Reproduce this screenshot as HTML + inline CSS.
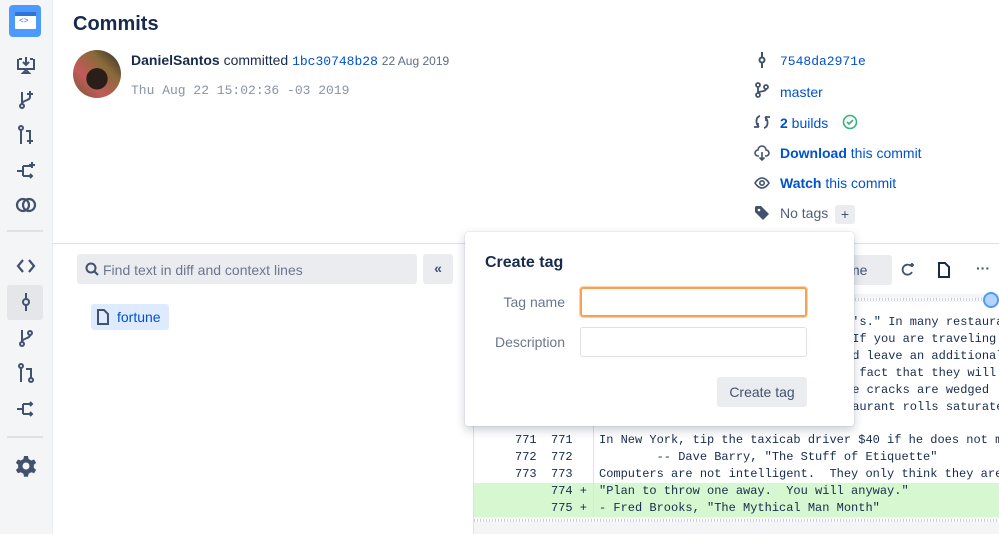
<!DOCTYPE html>
<html><head><meta charset="utf-8"><style>
*{box-sizing:border-box;margin:0;padding:0}
body{width:999px;height:534px;overflow:hidden;background:#fff;font-family:"Liberation Sans",sans-serif;color:#172b4d;position:relative}
.abs{position:absolute}
.side{left:0;top:0;width:53px;height:534px;background:#f4f5f7;border-right:1px solid #ebecf0}
.ic{position:absolute;left:14px;width:24px;height:24px}
.mono{font-family:"Liberation Mono",monospace}
.blue{color:#0052cc}
.code{font-family:"Liberation Mono",monospace;font-size:12px;white-space:pre;color:#172b4d}
.zig{background:repeating-linear-gradient(90deg,#c1c7d0 0 1px,#fff 1px 3px);opacity:.8}
</style></head><body>
<div class="abs side">
 <div class="abs" style="left:9px;top:5px;width:32px;height:32px;background:#4c9aff;border-radius:4px"></div>
 <div class="abs" style="left:15px;top:12px;width:21px;height:17px;background:#fff;border-top:4px solid #2f73d8;border-radius:1px"></div>
 <div class="abs" style="left:19px;top:17px;font-size:8px;color:#2f73d8;font-family:'Liberation Mono'">&lt;&gt;</div>
 <svg class="ic" style="top:53px" viewBox="0 0 24 24" fill="none" stroke="#42526e" stroke-width="2"><path d="M5 6h3M16 6h3M4 6v10h16V6M12 4v8M9 9l3 3 3-3M9 20h6l-3-3z"/></svg>
 <svg class="ic" style="top:88px" viewBox="0 0 24 24" fill="none" stroke="#42526e" stroke-width="2"><circle cx="8" cy="18" r="2"/><path d="M8 4v12M8 16c0-4 8-3 8-7M16 3v6M13 6h6"/></svg>
 <svg class="ic" style="top:123px" viewBox="0 0 24 24" fill="none" stroke="#42526e" stroke-width="2"><circle cx="7" cy="5" r="2"/><path d="M7 7v14M12 8h4v8M16 15v6M13 18h6"/></svg>
 <svg class="ic" style="top:158px" viewBox="0 0 24 24" fill="none" stroke="#42526e" stroke-width="2"><path d="M3 13h6M9 8v10M9 8h9M9 18h9M16 16l2 2-2 2M18 4v6M15 7h6"/></svg>
 <svg class="ic" style="top:193px" viewBox="0 0 24 24" fill="none" stroke="#42526e" stroke-width="2.2"><circle cx="9" cy="12" r="6"/><circle cx="15" cy="12" r="6"/></svg>
 <div class="abs" style="left:7px;top:230px;width:36px;height:2px;background:#dfe1e6"></div>
 <svg class="ic" style="top:254px" viewBox="0 0 24 24" fill="none" stroke="#42526e" stroke-width="2.2"><path d="M9 6l-5 6 5 6M15 6l5 6-5 6"/></svg>
 <div class="abs" style="left:7px;top:285px;width:36px;height:35px;background:#e4e6ea;border-radius:3px"></div>
 <svg class="ic" style="top:290px" viewBox="0 0 24 24" fill="none" stroke="#42526e" stroke-width="2"><path d="M12 3v6M12 15v6"/><circle cx="12" cy="12" r="3"/></svg>
 <svg class="ic" style="top:326px" viewBox="0 0 24 24" fill="none" stroke="#42526e" stroke-width="2"><circle cx="8" cy="18" r="2"/><circle cx="16" cy="7" r="2"/><path d="M8 4v12M8 16c0-4 8-3 8-7"/></svg>
 <svg class="ic" style="top:361px" viewBox="0 0 24 24" fill="none" stroke="#42526e" stroke-width="2"><circle cx="7" cy="5" r="2"/><circle cx="17" cy="19" r="2"/><path d="M7 7v14M12 8h5v9"/></svg>
 <svg class="ic" style="top:396px" viewBox="0 0 24 24" fill="none" stroke="#42526e" stroke-width="2"><path d="M3 13h6M9 8v10M9 8h9M9 18h9M16 6l2 2-2 2M16 16l2 2-2 2"/></svg>
 <div class="abs" style="left:7px;top:436px;width:36px;height:2px;background:#dfe1e6"></div>
 <svg class="ic" style="top:454px" viewBox="0 0 24 24"><path fill="#42526e" d="M10 2h4l.6 3 2.6 1.5 2.9-1 2 3.4-2.3 2v3l2.3 2-2 3.4-2.9-1-2.6 1.5-.6 3h-4l-.6-3-2.6-1.5-2.9 1-2-3.4 2.3-2v-3l-2.3-2 2-3.4 2.9 1L9.4 5z"/><circle cx="12" cy="12" r="3.5" fill="#f4f5f7"/></svg>
</div>

<div class="abs" style="left:73px;top:13px;font-size:20px;font-weight:bold;color:#172b4d">Commits</div>
<div class="abs" style="left:73px;top:50px;width:48px;height:48px;border-radius:50%;background:radial-gradient(circle at 50% 60%,#2a1f18 0 28%,transparent 29%),linear-gradient(45deg,#6b5a30,#c45a5a,#8a6a3a,#2a2a2a);"></div>
<div class="abs" style="left:131px;top:52px;font-size:14px;color:#172b4d"><b>DanielSantos</b> committed <span class="mono blue" style="font-size:13px">1bc30748b28</span> <span style="font-size:12px;color:#5e6c84">22 Aug 2019</span></div>
<div class="abs mono" style="left:131px;top:83px;font-size:13px;color:#8993a4">Thu Aug 22 15:02:36 -03 2019</div>

<div class="abs" style="left:755px;top:52px;font-size:14px;line-height:20px">
 <div style="position:absolute;left:25px;top:0" class="mono blue"><span style="font-size:13px">7548da2971e</span></div>
 <div style="position:absolute;left:25px;top:30px" class="blue">master</div>
 <div style="position:absolute;left:25px;top:61px;white-space:nowrap" class="blue"><b>2</b> builds</div>
 <div style="position:absolute;left:25px;top:91px;white-space:nowrap" class="blue"><b>Download</b> this commit</div>
 <div style="position:absolute;left:25px;top:121px;white-space:nowrap" class="blue"><b>Watch</b> this commit</div>
 <div style="position:absolute;left:25px;top:151px;white-space:nowrap;color:#505f79">No tags</div>
</div>
<svg class="abs" style="left:755px;top:52px" width="14" height="16" viewBox="0 0 14 16" fill="none" stroke="#42526e" stroke-width="2"><path d="M7 0v5M7 11v5"/><circle cx="7" cy="8" r="2.5"/></svg>
<svg class="abs" style="left:754px;top:82px" width="16" height="16" viewBox="0 0 16 16" fill="none" stroke="#42526e" stroke-width="1.8"><circle cx="4" cy="3" r="2"/><circle cx="4" cy="13" r="2"/><circle cx="12" cy="5" r="2"/><path d="M4 5v6M12 7c0 3-8 2-8 4"/></svg>
<svg class="abs" style="left:754px;top:114px" width="16" height="16" viewBox="0 0 16 16" fill="none" stroke="#42526e" stroke-width="1.8"><path d="M6 2C2 3 1 9 5 13M4 9v4H0M10 14c4-1 5-7 1-11M12 7V3h4"/></svg>
<svg class="abs" style="left:842px;top:114px" width="16" height="16" viewBox="0 0 16 16" fill="none" stroke="#36b37e" stroke-width="1.6"><circle cx="8" cy="8" r="6.5"/><path d="M5 8l2 2 4-4"/></svg>
<svg class="abs" style="left:754px;top:145px" width="16" height="16" viewBox="0 0 16 16" fill="none" stroke="#42526e" stroke-width="1.6"><path d="M5 11H4a3 3 0 010-6 4 4 0 018 0 3 3 0 010 6h-1M8 7v8M5.5 12.5L8 15l2.5-2.5"/></svg>
<svg class="abs" style="left:754px;top:176px" width="16" height="14" viewBox="0 0 16 14" fill="none" stroke="#42526e" stroke-width="1.6"><path d="M1 7s3-5 7-5 7 5 7 5-3 5-7 5-7-5-7-5z"/><circle cx="8" cy="7" r="2.2"/></svg>
<svg class="abs" style="left:755px;top:206px" width="15" height="14" viewBox="0 0 15 14"><path d="M0 1v5l8 8 6-6-8-8H1z" fill="#42526e"/><circle cx="4" cy="4" r="1.3" fill="#fff"/></svg>
<div class="abs" style="left:835px;top:205px;width:20px;height:19px;background:#ebecf0;border-radius:3px;text-align:center;font-size:14px;line-height:19px;color:#42526e">+</div>

<div class="abs" style="left:53px;top:243px;width:946px;height:1px;background:#dfe1e6"></div>

<div class="abs" style="left:77px;top:254px;width:340px;height:30px;background:#ebecf0;border-radius:3px"></div>
<svg class="abs" style="left:85px;top:262px" width="14" height="14" viewBox="0 0 14 14" fill="none" stroke="#42526e" stroke-width="2"><circle cx="6" cy="6" r="4.5"/><path d="M9.5 9.5L13 13"/></svg>
<div class="abs" style="left:103px;top:262px;font-size:14px;color:#6b778c">Find text in diff and context lines</div>
<div class="abs" style="left:423px;top:254px;width:30px;height:30px;background:#ebecf0;border-radius:3px;text-align:center;line-height:28px;font-size:14px;font-weight:bold;color:#42526e">«</div>
<div class="abs" style="left:91px;top:304px;width:78px;height:26px;background:#deebff;border-radius:3px"></div>
<svg class="abs" style="left:97px;top:309px" width="12" height="16" viewBox="0 0 12 16" fill="none" stroke="#42526e" stroke-width="2"><path d="M1 1h6l4 4v10H1z"/></svg>
<div class="abs" style="left:117px;top:309px;font-size:14px;color:#0052cc">fortune</div>

<div class="abs" style="left:473px;top:244px;width:526px;height:290px;border-left:1px solid #dfe1e6"></div>
<div class="abs" style="left:820px;top:255px;width:72px;height:30px;background:#ebecf0;border-radius:3px"></div>
<div class="abs" style="left:848px;top:262px;font-size:14px;color:#42526e">me</div>
<svg class="abs" style="left:900px;top:262px" width="16" height="16" viewBox="0 0 16 16" fill="none" stroke="#42526e" stroke-width="1.8"><path d="M12 10a5 5 0 11-1-6M12 1v4M10 3h4"/></svg>
<svg class="abs" style="left:938px;top:262px" width="12" height="16" viewBox="0 0 12 16" fill="none" stroke="#172b4d" stroke-width="2"><path d="M1 1h6l4 4v10H1z"/></svg>
<div class="abs" style="left:976px;top:260px;font-size:14px;font-weight:bold;color:#42526e">···</div>
<div class="abs" style="left:474px;top:294px;width:525px;height:8px;background:#f4f5f7"></div>
<div class="abs zig" style="left:474px;top:298px;width:525px;height:3px"></div>
<div class="abs" style="left:983px;top:292px;width:16px;height:16px;border-radius:50%;background:#b3d4ff;border:2px solid #4c9aff"></div>
<div class="abs" style="left:474px;top:483px;width:525px;height:34px;background:#d6f7d0"></div>
<div class="abs" style="left:593px;top:302px;width:1px;height:215px;background:#dfe1e6"></div>
<div class="abs" style="left:474px;top:517px;width:525px;height:17px;background:#f4f5f7"></div>
<div class="abs zig" style="left:474px;top:519px;width:525px;height:3px"></div>
<div class="abs code" style="left:515px;top:432px;line-height:17px">771  771
772  772
773  773
     774 +
     775 +</div>
<div class="abs code" style="left:845px;top:314px;line-height:17px">n's." In many restaurants
 If you are traveling
ld leave an additional
e fact that they will
he cracks are wedged
taurant rolls saturate</div>
<div class="abs code" style="left:599px;top:432px;line-height:17px">In New York, tip the taxicab driver $40 if he does not make
        -- Dave Barry, "The Stuff of Etiquette"
Computers are not intelligent.  They only think they are.
"Plan to throw one away.  You will anyway."
- Fred Brooks, "The Mythical Man Month"</div>

<div class="abs" style="left:465px;top:232px;width:389px;height:194px;background:#fff;border-radius:3px;box-shadow:0 4px 10px rgba(9,30,66,.22),0 0 1px rgba(9,30,66,.3)"></div>
<div class="abs" style="left:485px;top:254px;font-size:16px;font-weight:bold;color:#172b4d">Create tag</div>
<div class="abs" style="left:465px;top:294px;width:100px;text-align:right;font-size:14px;color:#6b778c">Tag name</div>
<div class="abs" style="left:580px;top:287px;width:227px;height:30px;border:2px solid #f6a058;border-radius:3px;box-shadow:0 0 0 1px #fbd4b0"></div>
<div class="abs" style="left:465px;top:334px;width:100px;text-align:right;font-size:14px;color:#6b778c">Description</div>
<div class="abs" style="left:580px;top:327px;width:227px;height:30px;border:1px solid #dfe1e6;border-radius:3px"></div>
<div class="abs" style="left:717px;top:377px;width:90px;height:30px;background:#ebecf0;border-radius:3px;text-align:center;line-height:30px;font-size:14px;color:#42526e">Create tag</div>
</body></html>
